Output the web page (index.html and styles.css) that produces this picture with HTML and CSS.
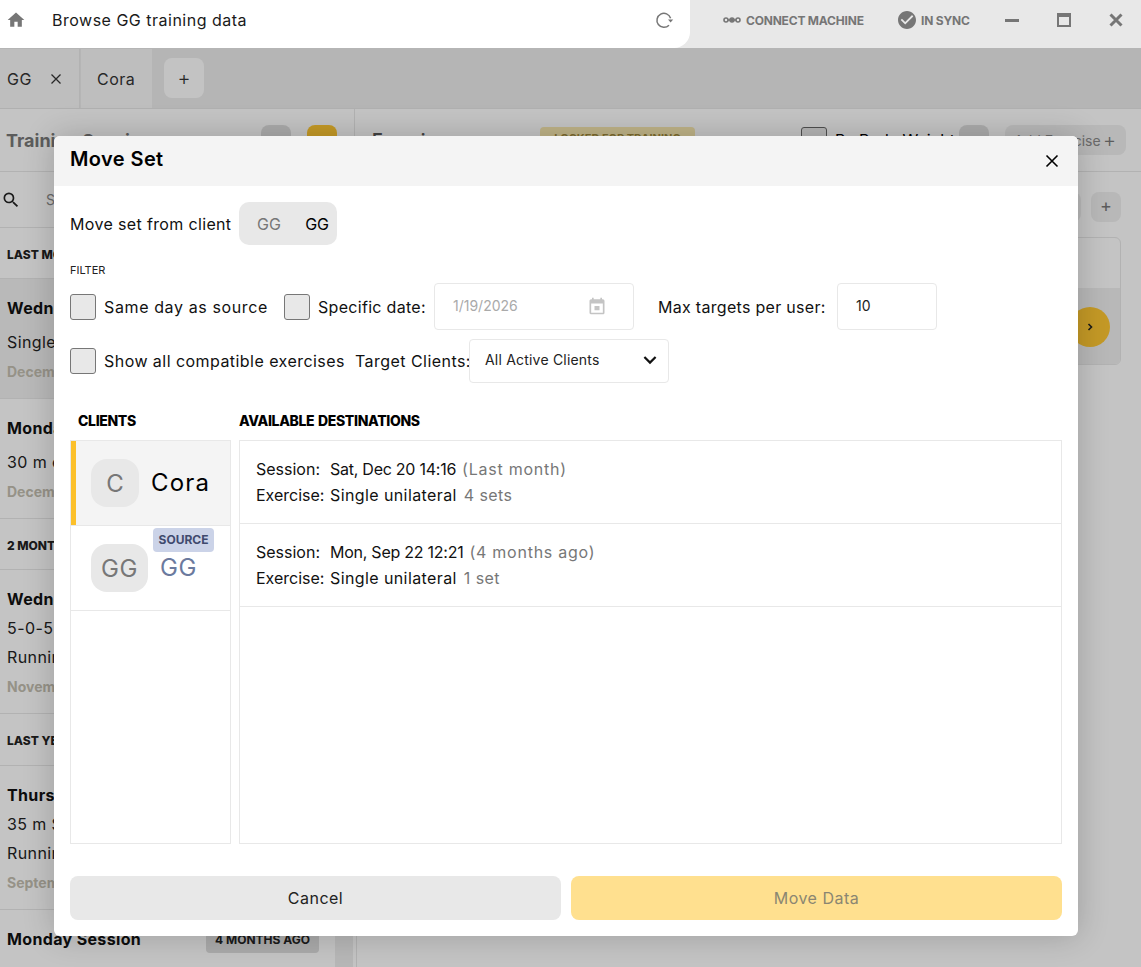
FILE: index.html
```html
<!DOCTYPE html>
<html lang="en">
<head>
  <meta charset="UTF-8">
  <meta name="viewport" content="width=device-width, initial-scale=1.0">
  <title>Browse GG training data</title>
  <link rel="stylesheet" href="styles.css">
</head>
<body>
  <header class="topbar">
    <div class="address">
      <svg class="home-icon" viewBox="0 0 24 24"><path d="M10 20v-6h4v6h5v-8h3L12 3 2 12h3v8z"/></svg>
      <span class="address-text">Browse GG training data</span>
      <svg class="refresh-icon" viewBox="0 0 20 20"><path d="M16.6 8.2A7 7 0 1 0 15 15.2"/><path class="fill" d="M14 9.6h5.2l-2.6 3z"/></svg>
    </div>
    <div class="status-area">
      <svg class="machine-icon" viewBox="0 0 18 8"><circle cx="3" cy="4" r="2"/><circle class="fill" cx="9" cy="4" r="2"/><circle cx="15" cy="4" r="2"/><path d="M5 4h2M11 4h2"/></svg>
      <span class="status-text connect">CONNECT MACHINE</span>
      <svg class="sync-icon" viewBox="2 2 20 20"><path d="M12 2C6.48 2 2 6.48 2 12s4.48 10 10 10 10-4.48 10-10S17.52 2 12 2zm-2 15l-5-5 1.41-1.41L10 14.17l7.59-7.59L19 8l-9 9z"/></svg>
      <span class="status-text sync">IN SYNC</span>
      <span class="win-min"></span>
      <span class="win-max"></span>
      <svg class="win-close" viewBox="0 0 14 14"><path d="M1.5 1.5l11 11M12.5 1.5l-11 11"/></svg>
    </div>
  </header>

  <div class="app">
    <div class="tabs">
      <div class="tab tab-first">GG <svg class="tab-x" viewBox="0 0 12 12"><path d="M1.5 1.5l9 9M10.5 1.5l-9 9"/></svg></div>
      <div class="tab tab-second">Cora</div>
      <div class="tab-add">+</div>
    </div>

    <div class="panels">
      <aside class="sessions">
        <div class="sessions-head">
          <span class="sessions-title">Training Sessions</span>
          <span class="head-btn"></span>
          <span class="head-btn yellow"></span>
        </div>
        <div class="search">
          <svg viewBox="0 0 24 24"><path d="M15.5 14h-.79l-.28-.27A6.471 6.471 0 0 0 16 9.5 6.5 6.5 0 1 0 9.5 16c1.61 0 3.09-.59 4.23-1.57l.27.28v.79l5 4.99L20.49 19l-4.99-5zm-6 0C7.01 14 5 11.99 5 9.5S7.01 5 9.5 5 14 7.01 14 9.5 11.99 14 9.5 14z"/></svg>
          <span>Search</span>
        </div>
        <div class="session-area">
          <div class="session-list">
            <div class="group">LAST MONTH</div>
            <div class="session active">
              <div class="session-name">Wednesday Session</div>
              <div class="session-line single">Single unilateral</div>
              <div class="session-date">December 24</div>
            </div>
            <div class="session">
              <div class="session-name">Monday Session</div>
              <div class="session-line single">30 m easy run</div>
              <div class="session-date">December 22</div>
            </div>
            <div class="group">2 MONTHS AGO</div>
            <div class="session">
              <div class="session-name">Wednesday Session</div>
              <div class="session-line">5-0-5 drill</div>
              <div class="session-line">Running</div>
              <div class="session-date">November 12</div>
            </div>
            <div class="group last-year">LAST YEAR</div>
            <div class="session">
              <div class="session-name">Thursday Session</div>
              <div class="session-line">35 m Sprint</div>
              <div class="session-line">Running</div>
              <div class="session-date">September 25</div>
            </div>
            <div class="session">
              <div class="session-row">
                <span class="session-name">Monday Session</span>
                <span class="age">4 MONTHS AGO</span>
              </div>
              <div class="session-line">Single unilateral</div>
            </div>
          </div>
          <div class="scrollbar"></div>
        </div>
      </aside>

      <main class="exercises">
        <div class="exercises-head">
          <span class="exercises-title">Exercises</span>
          <span class="ready">LOCKED FOR TRAINING</span>
          <span class="head-check"></span>
          <span class="head-check-label">By Body Weight</span>
          <span class="head-btn"></span>
          <span class="add-exercise">Add Exercise <b>+</b></span>
        </div>
        <div class="exercise-body">
          <div class="exercise-tools">
            <span class="tool-btn"></span>
            <span class="tool-btn">+</span>
          </div>
          <div class="exercise-card">
            <div class="exercise-top"></div>
            <div class="exercise-bottom">
              <span class="next-btn">
                <svg viewBox="0 0 10 10"><path d="M3.5 2l3 3-3 3"/></svg>
              </span>
            </div>
          </div>
        </div>
      </main>
    </div>

    <div class="scrim"></div>

    <section class="modal">
      <div class="modal-head">
        <h2>Move Set</h2>
        <svg class="modal-close" viewBox="0 0 14 14"><path d="M1.5 1.5l11 11M12.5 1.5l-11 11"/></svg>
      </div>

      <div class="modal-body">
        <div class="source-row">
          <span class="label">Move set from client</span>
          <div class="source-toggle">
            <span class="muted">GG</span>
            <span>GG</span>
          </div>
        </div>

        <div class="filter-title">FILTER</div>

        <div class="filter-row first">
          <span class="checkbox"></span>
          <span class="label same-day">Same day as source</span>
          <span class="checkbox"></span>
          <span class="label specific">Specific date:</span>
          <div class="field date-field">
            <span>1/19/2026</span>
            <svg viewBox="0 0 24 24"><path d="M19 4h-1V2h-2v2H8V2H6v2H5c-1.11 0-2 .9-2 2v14a2 2 0 0 0 2 2h14c1.1 0 2-.9 2-2V6c0-1.1-.9-2-2-2zm0 16H5V9h14v11zM9 12h6v5H9z"/></svg>
          </div>
          <span class="label max-targets">Max targets per user:</span>
          <div class="field max-field">10</div>
        </div>

        <div class="filter-row second">
          <span class="checkbox"></span>
          <span class="label show-all">Show all compatible exercises</span>
          <span class="label target">Target Clients:</span>
          <div class="field select-field">
            <span>All Active Clients</span>
            <svg viewBox="0 0 12 8"><path d="M1.2 1.4L6 6.2l4.8-4.8"/></svg>
          </div>
        </div>

        <div class="columns">
          <div class="column-clients">
            <h3 class="clients-title">CLIENTS</h3>
            <div class="list-box">
              <div class="client selected">
                <span class="avatar">C</span>
                <span class="client-name">Cora</span>
              </div>
              <div class="client">
                <span class="avatar wide">GG</span>
                <span class="client-name source">GG</span>
                <span class="source-badge">SOURCE</span>
              </div>
            </div>
          </div>
          <div class="column-dest">
            <h3>AVAILABLE DESTINATIONS</h3>
            <div class="list-box">
              <div class="dest">
                <div class="dest-line"><span class="dest-key">Session:</span><span class="dest-date">Sat, Dec 20 14:16</span><span class="dest-note">(Last month)</span></div>
                <div class="dest-line"><span class="dest-key">Exercise:</span><span>Single unilateral</span><span class="dest-count">4 sets</span></div>
              </div>
              <div class="dest">
                <div class="dest-line"><span class="dest-key">Session:</span><span class="dest-date">Mon, Sep 22 12:21</span><span class="dest-note">(4 months ago)</span></div>
                <div class="dest-line"><span class="dest-key">Exercise:</span><span>Single unilateral</span><span class="dest-count">1 set</span></div>
              </div>
            </div>
          </div>
        </div>

        <div class="modal-foot">
          <button class="btn cancel">Cancel</button>
          <button class="btn move">Move Data</button>
        </div>
      </div>
    </section>
  </div>
</body>
</html>
```

FILE: styles.css
```css
* {
  box-sizing: border-box;
}
html, body {
  height: 100%;
}
body {
  margin: 0;
  font-family: Inter, "Liberation Sans", sans-serif;
  font-size: 16px;
  color: #000;
  background: #fff;
  display: flex;
  flex-direction: column;
  overflow: hidden;
}

/* top bar, above the scrim */
.topbar {
  height: 48px;
  flex: none;
  display: flex;
  background: #e8e8e8;
}
.address {
  width: 690px;
  display: flex;
  align-items: center;
  background: #fff;
  border-bottom-right-radius: 16px;
  padding: 0 16px 8px 6px;
}
.home-icon {
  width: 20px;
  height: 20px;
  fill: #767676;
}
.address-text {
  margin-left: 26px;
  letter-spacing: 0.5px;
  flex: 1;
  color: #1a1a1a;
}
.refresh-icon {
  width: 20px;
  height: 20px;
  fill: none;
  stroke: #767676;
  stroke-width: 1.5;
}
.refresh-icon .fill {
  fill: #767676;
  stroke: none;
}
.status-area {
  flex: 1;
  display: flex;
  align-items: center;
  padding: 0 0 8px 33px;
  color: #767676;
}
.machine-icon {
  width: 18px;
  height: 8px;
  fill: none;
  stroke: #767676;
  stroke-width: 1.6;
}
.machine-icon .fill {
  fill: #767676;
}
.status-text {
  font-size: 12px;
  font-weight: 700;
  letter-spacing: -0.2px;
  white-space: nowrap;
}
.connect {
  margin-left: 5px;
  width: 118px;
}
.sync-icon {
  width: 18px;
  height: 18px;
  margin-left: 34px;
  fill: #767676;
}
.sync {
  margin-left: 5px;
  width: 49px;
}
.win-min {
  width: 14px;
  height: 3px;
  margin-left: 35px;
  background: #767676;
}
.win-max {
  width: 14px;
  height: 14px;
  margin-left: 38px;
  border: 2px solid #767676;
  border-top-width: 4px;
}
.win-close {
  width: 14px;
  height: 14px;
  margin-left: 38px;
  fill: none;
  stroke: #767676;
  stroke-width: 3;
}

/* app behind the dialog */
.app {
  position: relative;
  flex: 1;
  min-height: 0;
  display: flex;
  flex-direction: column;
  overflow: hidden;
}
.scrim {
  position: absolute;
  inset: 0;
  background: rgba(0, 0, 0, 0.22);
}
.tabs {
  height: 61px;
  flex: none;
  display: flex;
  align-items: flex-end;
  background: #e8e8e8;
  border-bottom: 1px solid #e2e2e2;
}
.tab {
  height: 59px;
  display: flex;
  align-items: center;
  background: #f4f4f4;
  letter-spacing: 0.5px;
  color: #333;
}
.tab-first {
  width: 80px;
  padding-left: 7px;
  border-right: 1px solid #e4e4e4;
  margin-right: 1px;
}
.tab-x {
  width: 12px;
  height: 12px;
  margin-left: 18px;
  fill: none;
  stroke: #333;
  stroke-width: 1.3;
}
.tab-second {
  width: 71px;
  padding-left: 16px;
}
.tab-add {
  width: 40px;
  height: 40px;
  margin: 0 0 10px 12px;
  display: flex;
  align-items: center;
  justify-content: center;
  background: #fafafa;
  border-radius: 8px;
  font-size: 20px;
  font-weight: 300;
  color: #333;
}
.panels {
  flex: 1;
  min-height: 0;
  display: flex;
  background: #fbfbfb;
}
.sessions {
  width: 354px;
  flex: none;
  display: flex;
  flex-direction: column;
}
.sessions-head {
  height: 63px;
  flex: none;
  display: flex;
  align-items: center;
  padding: 0 17px 0 6px;
  gap: 16px;
  border-bottom: 1px solid #e4e4e4;
}
.sessions-title {
  flex: 1;
  font-size: 18px;
  font-weight: 700;
  color: #777;
}
.head-btn {
  width: 30px;
  height: 30px;
  border-radius: 8px;
  background: #dcdcdc;
}
.head-btn.yellow {
  background: #fbc531;
}
.search {
  height: 56px;
  flex: none;
  display: flex;
  align-items: center;
  padding-left: 1px;
  gap: 25px;
  border-bottom: 1px solid #e4e4e4;
  color: #888;
  font-size: 14px;
}
.search svg {
  width: 20px;
  height: 20px;
  fill: #222;
}
.session-area {
  flex: 1;
  min-height: 0;
  display: flex;
}
.session-list {
  width: 335px;
  flex: none;
}
.scrollbar {
  width: 18px;
  background: #ebebeb;
}
.group {
  height: 51px;
  padding: 19px 0 0 7px;
  border-bottom: 1px solid #e4e4e4;
  font-size: 12px;
  font-weight: 800;
  color: #222;
}
.group.last-year {
  height: 52px;
}
.session {
  padding: 18px 16px 15px 7px;
  border-bottom: 1px solid #e4e4e4;
}
.session.active {
  background: #eeeeee;
}
.session-name {
  font-size: 16px;
  font-weight: 700;
  line-height: 22px;
  letter-spacing: 0.35px;
  color: #111;
  margin-bottom: 4px;
}
.session-line {
  line-height: 29px;
  letter-spacing: 0.4px;
  color: #222;
}
.session-line.single {
  margin-top: 9px;
}
.session-date {
  margin-top: 4px;
  font-size: 14px;
  font-weight: 700;
  line-height: 22px;
  color: #c0bcae;
}
.session-row {
  display: flex;
  justify-content: space-between;
  align-items: flex-start;
  margin-bottom: 7px;
}
.age {
  width: 113px;
  height: 26px;
  margin-top: -1px;
  background: #dadada;
  border-radius: 4px;
  font-size: 12px;
  font-weight: 700;
  line-height: 26px;
  text-align: center;
  color: #222;
}
.exercises {
  flex: 1;
  display: flex;
  flex-direction: column;
}
.exercises-head {
  height: 63px;
  flex: none;
  display: flex;
  align-items: center;
  padding: 0 15px 0 17px;
  border-left: 1px solid #e4e4e4;
  border-bottom: 1px solid #e4e4e4;
}
.exercises-title {
  width: 168px;
  font-size: 18px;
  font-weight: 600;
  color: #555;
}
.ready {
  width: 155px;
  height: 26px;
  background: #f5e6ae;
  border-radius: 4px;
  font-size: 11px;
  font-weight: 700;
  line-height: 22px;
  text-align: center;
  white-space: nowrap;
  overflow: hidden;
  color: #a08a3c;
}
.head-check {
  width: 26px;
  height: 26px;
  margin-left: 106px;
  border: 1px solid #666;
  border-radius: 3px;
  background: #e8e8e8;
}
.head-check-label {
  width: 124px;
  margin-left: 8px;
  white-space: nowrap;
}
.add-exercise {
  width: 121px;
  height: 30px;
  margin-left: 16px;
  padding: 0 10px 0 9px;
  display: flex;
  align-items: center;
  justify-content: space-between;
  background: #ececec;
  border-radius: 8px;
  font-size: 14px;
  color: #888;
  white-space: nowrap;
}
.add-exercise b {
  font-weight: 300;
  font-size: 20px;
  color: #777;
}
.exercise-body {
  flex: 1;
  margin-left: 2px;
  border-left: 1px solid #e4e4e4;
}
.exercise-tools {
  display: flex;
  justify-content: flex-end;
  gap: 10px;
  padding: 20px 20px 0 0;
}
.tool-btn {
  width: 30px;
  height: 30px;
  background: #ececec;
  border-radius: 8px;
  text-align: center;
  line-height: 28px;
  font-size: 18px;
  color: #777;
}
.exercise-card {
  margin: 15px 20px 0 15px;
  height: 128px;
  border: 1px solid #e4e4e4;
  border-radius: 6px;
  overflow: hidden;
}
.exercise-top {
  height: 50px;
}
.exercise-bottom {
  height: 77px;
  display: flex;
  align-items: center;
  justify-content: flex-end;
  padding-right: 10px;
  background: #ececec;
}
.next-btn {
  width: 40px;
  height: 40px;
  display: flex;
  align-items: center;
  justify-content: center;
  background: #fbc531;
  border-radius: 50%;
}
.next-btn svg {
  width: 10px;
  height: 10px;
  fill: none;
  stroke: #222;
  stroke-width: 1.6;
}

/* dialog */
.modal {
  position: absolute;
  left: 54px;
  top: 88px;
  width: 1024px;
  height: 800px;
  background: #fff;
  border-radius: 6px;
  overflow: hidden;
  box-shadow: 0 0 32px rgba(0, 0, 0, 0.2);
}
.modal-head {
  height: 50px;
  display: flex;
  align-items: center;
  justify-content: space-between;
  padding: 0 19px 0 16px;
  background: #f4f4f4;
}
.modal-head h2 {
  margin: 0;
  font-size: 20px;
  font-weight: 600;
  letter-spacing: 0.4px;
  position: relative;
  top: -2px;
}
.modal-close {
  width: 14px;
  height: 14px;
  fill: none;
  stroke: #000;
  stroke-width: 1.6;
}
.modal-body {
  padding: 16px;
}
.label {
  letter-spacing: 0.45px;
  white-space: nowrap;
  color: #111;
}
.source-row {
  height: 43px;
  display: flex;
  align-items: center;
}
.source-row .label {
  width: 169px;
  letter-spacing: 0.35px;
}
.source-toggle {
  width: 98px;
  height: 43px;
  display: flex;
  align-items: center;
  justify-content: space-between;
  padding: 0 8px 0 18px;
  background: #e8e8e8;
  border-radius: 10px;
}
.muted {
  color: #777;
}
.filter-title {
  margin-top: 18px;
  height: 15px;
  font-size: 11px;
  line-height: 15px;
  color: #222;
}
.filter-row {
  display: flex;
  align-items: center;
}
.filter-row.first {
  height: 47px;
  margin-top: 5px;
}
.filter-row.second {
  height: 44px;
  margin-top: 9px;
}
.checkbox {
  width: 26px;
  height: 26px;
  flex: none;
  background: #e8e8e8;
  border: 1px solid #777;
  border-radius: 3px;
}
.same-day {
  width: 180px;
  margin-left: 8px;
  letter-spacing: 0.62px;
}
.specific {
  width: 116px;
  margin-left: 8px;
  letter-spacing: 0.3px;
}
.field {
  height: 100%;
  display: flex;
  align-items: center;
  border: 1px solid #e8e8e8;
  border-radius: 4px;
  font-size: 14px;
}
.date-field {
  width: 200px;
  padding: 0 26px 2px 18px;
  justify-content: space-between;
  color: #aaa;
}
.date-field svg {
  width: 20px;
  height: 20px;
  fill: #c4c4c4;
}
.max-targets {
  width: 179px;
  margin-left: 24px;
  letter-spacing: 0.3px;
}
.max-field {
  width: 100px;
  padding: 0 0 2px 18px;
  color: #222;
}
.show-all {
  width: 251px;
  margin-left: 8px;
}
.target {
  width: 114px;
}
.select-field {
  width: 200px;
  padding: 0 11px 3px 15px;
  justify-content: space-between;
  letter-spacing: 0.2px;
  color: #222;
}
.select-field svg {
  width: 14px;
  height: 10px;
  fill: none;
  stroke: #111;
  stroke-width: 1.9;
}
.columns {
  display: flex;
  gap: 8px;
  margin-top: 22px;
}
.columns h3 {
  margin: 0;
  height: 35px;
  font-size: 14px;
  font-weight: 800;
  line-height: 32px;
  letter-spacing: -0.35px;
  word-spacing: 1px;
}
.clients-title {
  padding-left: 8px;
}
.column-clients {
  width: 161px;
  flex: none;
}
.column-dest {
  flex: 1;
}
.list-box {
  height: 404px;
  border: 1px solid #e8e8e8;
}
.client {
  position: relative;
  height: 85px;
  display: flex;
  align-items: center;
  padding-left: 20px;
  border-bottom: 1px solid #e8e8e8;
}
.client.selected {
  background: #f4f4f4;
  box-shadow: inset 5px 0 0 #fcc02a;
}
.avatar {
  width: 48px;
  height: 48px;
  flex: none;
  display: flex;
  align-items: center;
  justify-content: center;
  background: #e8e8e8;
  border-radius: 16px;
  font-size: 24px;
  color: #777;
}
.avatar.wide {
  width: 57px;
  letter-spacing: 0.6px;
}
.client-name {
  margin-left: 12px;
  padding-bottom: 2px;
  font-size: 24px;
  letter-spacing: 1.2px;
}
.client-name.source {
  color: #6b7a9e;
  letter-spacing: 0.6px;
}
.source-badge {
  position: absolute;
  left: 82px;
  top: 2px;
  width: 61px;
  height: 24px;
  background: #cbd3e8;
  border-radius: 4px;
  font-size: 12px;
  font-weight: 700;
  line-height: 24px;
  text-align: center;
  color: #3f4a6e;
}
.dest {
  height: 83px;
  padding: 15px 16px 0;
  border-bottom: 1px solid #e8e8e8;
}
.dest-line {
  display: flex;
  height: 26px;
  line-height: 26px;
  letter-spacing: 0.4px;
  color: #111;
}
.dest-key {
  width: 74px;
  letter-spacing: 0;
}
.dest-date {
  letter-spacing: -0.25px;
}
.dest-note {
  margin-left: 6px;
  letter-spacing: 0.75px;
  color: #777;
}
.dest-count {
  margin-left: 7px;
  color: #777;
}
.modal-foot {
  display: flex;
  gap: 10px;
  margin-top: 32px;
}
.btn {
  flex: 1;
  height: 44px;
  border: none;
  border-radius: 8px;
  font: inherit;
  letter-spacing: 0.5px;
}
.cancel {
  background: #e8e8e8;
  color: #222;
}
.move {
  background: #ffe08f;
  color: #8a8672;
}
```
